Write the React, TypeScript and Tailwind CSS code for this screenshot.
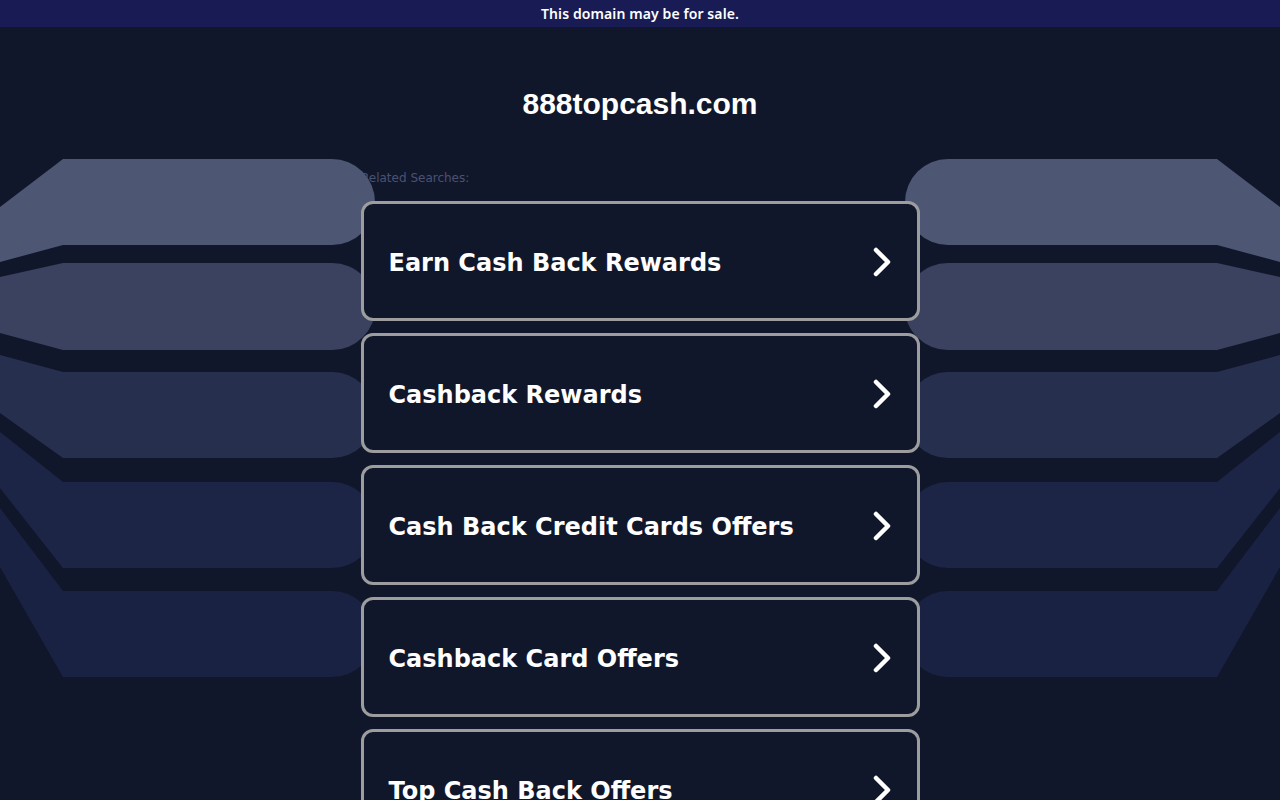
import React from 'react';

const links = [
  'Earn Cash Back Rewards',
  'Cashback Rewards',
  'Cash Back Credit Cards Offers',
  'Cashback Card Offers',
  'Top Cash Back Offers',
];

// left side fan of rounded bands, mirrored on the right
const bands = [
  { d: 'M0 207 L63 159 L332 159 A43 43 0 0 1 332 245 L63 245 L0 262 Z', fill: '#4d5673' },
  { d: 'M0 277 L63 263 L332 263 A43 43 0 0 1 332 350 L63 350 L0 333 Z', fill: '#3a4260' },
  { d: 'M0 355 L63 372 L332 372 A43 43 0 0 1 332 458 L63 458 L0 413 Z', fill: '#272f4e' },
  { d: 'M0 432 L63 482 L332 482 A43 43 0 0 1 332 568 L63 568 L0 488 Z', fill: '#1d2547' },
  { d: 'M0 508 L63 591 L332 591 A43 43 0 0 1 332 677 L63 677 L0 567 Z', fill: '#1a2243' },
];

const Backdrop: React.FC = () => (
  <svg className="absolute left-0 top-0 pointer-events-none" width="1280" height="800" viewBox="0 0 1280 800">
    {bands.map((b, i) => (
      <path key={'l' + i} d={b.d} fill={b.fill} />
    ))}
    <g transform="translate(1280 0) scale(-1 1)">
      {bands.map((b, i) => (
        <path key={'r' + i} d={b.d} fill={b.fill} />
      ))}
    </g>
  </svg>
);

const Chevron: React.FC = () => (
  <svg width="22" height="30" viewBox="0 0 22 30" fill="none">
    <path d="M5 3 L17 15 L5 27" stroke="white" strokeWidth="4.5" strokeLinecap="round" strokeLinejoin="round" />
  </svg>
);

export default function App() {
  return (
    <div className="relative w-full h-[800px] overflow-hidden bg-[#11172b]">
      <div className="h-[27px] bg-[#191c54] flex items-center justify-center">
        <span className="text-white text-[14px] font-semibold tracking-[0.1px]" style={{ fontFamily: '"Noto Sans", sans-serif' }}>
          This domain may be for sale.
        </span>
      </div>

      <h1
        className="mt-[59px] text-center text-white font-bold text-[30px] leading-[36px]"
        style={{ fontFamily: '"Liberation Sans", Arial, sans-serif' }}
      >
        888topcash.com
      </h1>

      <div className="w-[558px] mx-auto mt-[48px]">
        <p className="text-[12px] leading-[16px] text-[#4a5272]" style={{ fontFamily: '"DejaVu Sans", Verdana, sans-serif' }}>
          Related Searches:
        </p>
      </div>

      <Backdrop />

      <div className="relative z-10 w-[559px] mx-auto mt-[15px] flex flex-col gap-[12px]">
        {links.map((t) => (
          <a
            key={t}
            href="#"
            className="h-[120px] shrink-0 rounded-[12px] border-[3px] border-[#9d9d9f] bg-[#11172b] flex items-center justify-between pl-[25px] pr-[24px]"
          >
            <span
              className="text-white font-bold text-[24px] leading-[30px] pt-[4px]"
              style={{ fontFamily: '"DejaVu Sans", Verdana, sans-serif' }}
            >
              {t}
            </span>
            <span className="pt-[2px]">
              <Chevron />
            </span>
          </a>
        ))}
      </div>
    </div>
  );
}
